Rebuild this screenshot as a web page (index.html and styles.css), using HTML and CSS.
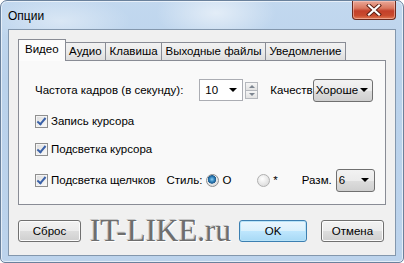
FILE: index.html
```html
<!DOCTYPE html>
<html lang="ru">
<head>
    <meta charset="UTF-8">
    <title>Опции</title>
    <link rel="stylesheet" href="styles.css">
</head>
<body>
<div class="window">
    <div class="titlebar">
        <span class="title">Опции</span>
        <button class="close">
            <svg width="16" height="12" viewBox="0 0 16 12">
                <path d="M3 1.5 L13 10.5 M13 1.5 L3 10.5" stroke="#5a1d12" stroke-width="4" stroke-linecap="square"/>
                <path d="M3 1.5 L13 10.5 M13 1.5 L3 10.5" stroke="#fff" stroke-width="2.2" stroke-linecap="square"/>
            </svg>
        </button>
    </div>
    <div class="client">
        <ul class="tabs">
            <li class="tab active">Видео</li>
            <li class="tab">Аудио</li>
            <li class="tab">Клавиша</li>
            <li class="tab">Выходные файлы</li>
            <li class="tab">Уведомление</li>
        </ul>
        <div class="panel">
            <div class="row row-rate">
                <span class="label">Частота кадров (в секунду):</span>
                <div class="combo combo-rate"><span>10</span><i class="arrow"></i></div>
                <div class="spin"><b class="up"></b><b class="down"></b></div>
                <span class="label quality">Качеств</span>
                <div class="combo combo-btn combo-quality"><span>Хороше</span><i class="arrow"></i></div>
            </div>
            <div class="row row-check">
                <span class="checkbox"></span><span class="label">Запись курсора</span>
            </div>
            <div class="row row-check">
                <span class="checkbox"></span><span class="label">Подсветка курсора</span>
            </div>
            <div class="row row-check row-last">
                <span class="checkbox"></span><span class="label">Подсветка щелчков</span>
                <span class="label style">Стиль:</span>
                <span class="radio on"></span><span class="label">O</span>
                <span class="radio off"></span><span class="label">*</span>
                <span class="label size">Разм.</span>
                <div class="combo combo-btn combo-size"><span>6</span><i class="arrow"></i></div>
            </div>
        </div>
        <div class="buttons">
            <button class="btn btn-reset">Сброс</button>
            <span class="watermark">IT-LIKE.ru</span>
            <button class="btn btn-ok">OK</button>
            <button class="btn btn-cancel">Отмена</button>
        </div>
    </div>
</div>
</body>
</html>
```

FILE: styles.css
```css
* {
    margin: 0;
    padding: 0;
    box-sizing: border-box;
}
ul {
    list-style: none;
}
body {
    width: 404px;
    height: 263px;
    overflow: hidden;
    font-family: "Liberation Sans", Arial, sans-serif;
    font-size: 11.5px;
    color: #000;
    background: #fff;
}
.window {
    width: 404px;
    height: 263px;
    display: flex;
    flex-direction: column;
    padding: 0 7px 6px 7px;
    border: 1px solid #6a819c;
    border-radius: 7px 7px 5px 5px;
    background:
        radial-gradient(ellipse 60px 30px at 215px 12px, rgba(255,255,255,.55), rgba(255,255,255,0)),
        radial-gradient(ellipse 70px 25px at 60px 20px, rgba(255,255,255,.4), rgba(255,255,255,0)),
        linear-gradient(180deg, #c2d8ef 0%, #bad2eb 30%, #bcd3ec 100%);
    box-shadow: inset 0 0 0 1px rgba(255,255,255,.6);
}
.titlebar {
    height: 28px;
    display: flex;
    align-items: flex-start;
}
.title {
    padding-top: 8px;
    font-size: 12px;
    color: #000;
}
.close {
    margin-left: auto;
    width: 44px;
    height: 19px;
    border: 1px solid #6a2a1e;
    border-top: none;
    border-radius: 0 0 4px 4px;
    background: linear-gradient(180deg, #e9a898 0%, #d9775f 40%, #c3402a 55%, #c94a2d 80%, #e07a55 100%);
    box-shadow: inset 0 0 0 1px rgba(255,210,200,.5);
    display: flex;
    align-items: center;
    justify-content: center;
}
.client {
    flex: 1;
    display: flex;
    flex-direction: column;
    border: 1px solid #8397ad;
    background: #f0f0f0;
    padding: 9px 9px 12px 9px;
}
.label {
    white-space: nowrap;
    flex-shrink: 0;
}

/* вкладки */
.tabs {
    display: flex;
    align-items: flex-end;
    height: 21px;
    position: relative;
    z-index: 1;
}
.tab {
    height: 18px;
    line-height: 16px;
    padding: 0 3.5px;
    border: 1px solid #898c95;
    border-bottom: none;
    margin-left: -1px;
    background: linear-gradient(180deg, #f2f2f2 0%, #ebebeb 50%, #dddddd 100%);
    white-space: nowrap;
}
.tab.active {
    height: 22px;
    margin-left: 0;
    margin-bottom: -1px;
    padding: 0 6px;
    line-height: 19px;
    background: #fcfcfc;
    z-index: 2;
}
.panel {
    height: 145px;
    border: 1px solid #898c95;
    background: #f9f9f9;
    padding: 18px 0 0 16px;
    display: flex;
    flex-direction: column;
}
.row {
    display: flex;
    align-items: center;
}
.row-rate {
    height: 22px;
}
.row-check {
    margin-top: 12px;
    height: 16px;
}
.row-check + .row-check {
    margin-top: 12px;
}
.row-last {
    margin-top: 12px;
    height: 22px;
}

/* поля */
.combo {
    height: 22px;
    display: flex;
    align-items: center;
    flex-shrink: 0;
    padding: 0 5px 0 5px;
    border: 1px solid #abadb3;
    background: #fff;
}
.combo span {
    flex: 1;
}
.combo-rate {
    margin-left: 16px;
    width: 44px;
}
.combo-btn {
    border: 1px solid #707070;
    border-radius: 3px;
    padding-left: 2px;
    background: linear-gradient(180deg, #f2f2f2 0%, #ebebeb 50%, #dddddd 51%, #cfcfcf 100%);
}
.combo-quality {
    width: 60px;
    height: 23px;
    padding-right: 4px;
}
.combo-size {
    margin-left: 4px;
    width: 39px;
    height: 23px;
}
.arrow {
    width: 0;
    height: 0;
    border-left: 4px solid transparent;
    border-right: 4px solid transparent;
    border-top: 4px solid #000;
}
.spin {
    margin-left: 2px;
    width: 13px;
    height: 17px;
    display: flex;
    flex-direction: column;
}
.spin b {
    flex: 1;
    border: 1px solid #b5b8bd;
    background: linear-gradient(180deg, #f6f6f6, #e2e2e2);
    display: flex;
    align-items: center;
    justify-content: center;
}
.spin b + b {
    border-top: none;
}
.spin .up::after, .spin .down::after {
    content: "";
    border-left: 3px solid transparent;
    border-right: 3px solid transparent;
}
.spin .up::after {
    border-bottom: 3px solid #7d8590;
}
.spin .down::after {
    border-top: 3px solid #7d8590;
}
.quality {
    margin-left: 12px;
}

/* флажки и переключатели */
.checkbox {
    width: 13px;
    height: 13px;
    flex-shrink: 0;
    margin-right: 3px;
    border: 1px solid #8f8f8f;
    background: linear-gradient(135deg, #dcdcdc, #fbfbfb);
    box-shadow: inset 0 0 0 1px #f4f4f4;
    position: relative;
}
.checkbox::after {
    content: "";
    position: absolute;
    left: 3px;
    top: 0;
    width: 3px;
    height: 7px;
    border-right: 2px solid #3a61a8;
    border-bottom: 2px solid #3a61a8;
    transform: rotate(40deg);
}
.style {
    margin-left: 11px;
}
.radio {
    width: 13px;
    height: 13px;
    flex-shrink: 0;
    border-radius: 50%;
    border: 1px solid #8f8f8f;
    background: radial-gradient(circle at 40% 35%, #fff, #d3d3d3);
    margin: 0 3px 0 4px;
}
.radio.on {
    background:
        radial-gradient(circle at 45% 40%, #8ed0f5 0, #2f7fb8 2.5px, #1d5b8e 4px, transparent 4.5px),
        radial-gradient(circle at 40% 35%, #fff, #d3d3d3);
}
.radio.off {
    margin-left: 26px;
    border-color: #b0b0b0;
}
.size {
    margin-left: 24px;
}

/* кнопки */
.buttons {
    margin-top: auto;
    display: flex;
    align-items: center;
    height: 24px;
}
.btn {
    height: 22px;
    width: 63px;
    font-family: inherit;
    font-size: 11.5px;
    border: 1px solid #707070;
    border-radius: 3px;
    background: linear-gradient(180deg, #f2f2f2 0%, #ebebeb 50%, #dddddd 51%, #cfcfcf 100%);
    box-shadow: inset 0 0 0 1px #fcfcfc;
}
.btn-ok {
    margin-left: auto;
    width: 68px;
    border-color: #3c7fb1;
    background: linear-gradient(180deg, #eaf6fd 0%, #d9f0fc 50%, #bee6fd 51%, #a7d9f5 100%);
    box-shadow: inset 0 0 0 1px #b8e3f8;
}
.btn-cancel {
    margin-left: 14px;
    margin-right: 2px;
}
.watermark {
    margin-left: 9px;
    font-family: "Liberation Serif", "Times New Roman", serif;
    font-size: 31px;
    line-height: 24px;
    color: #6e6e6e;
    text-shadow: 1px 1px 0 #fff, -1px -1px 0 #c8c8c8;
}
```
